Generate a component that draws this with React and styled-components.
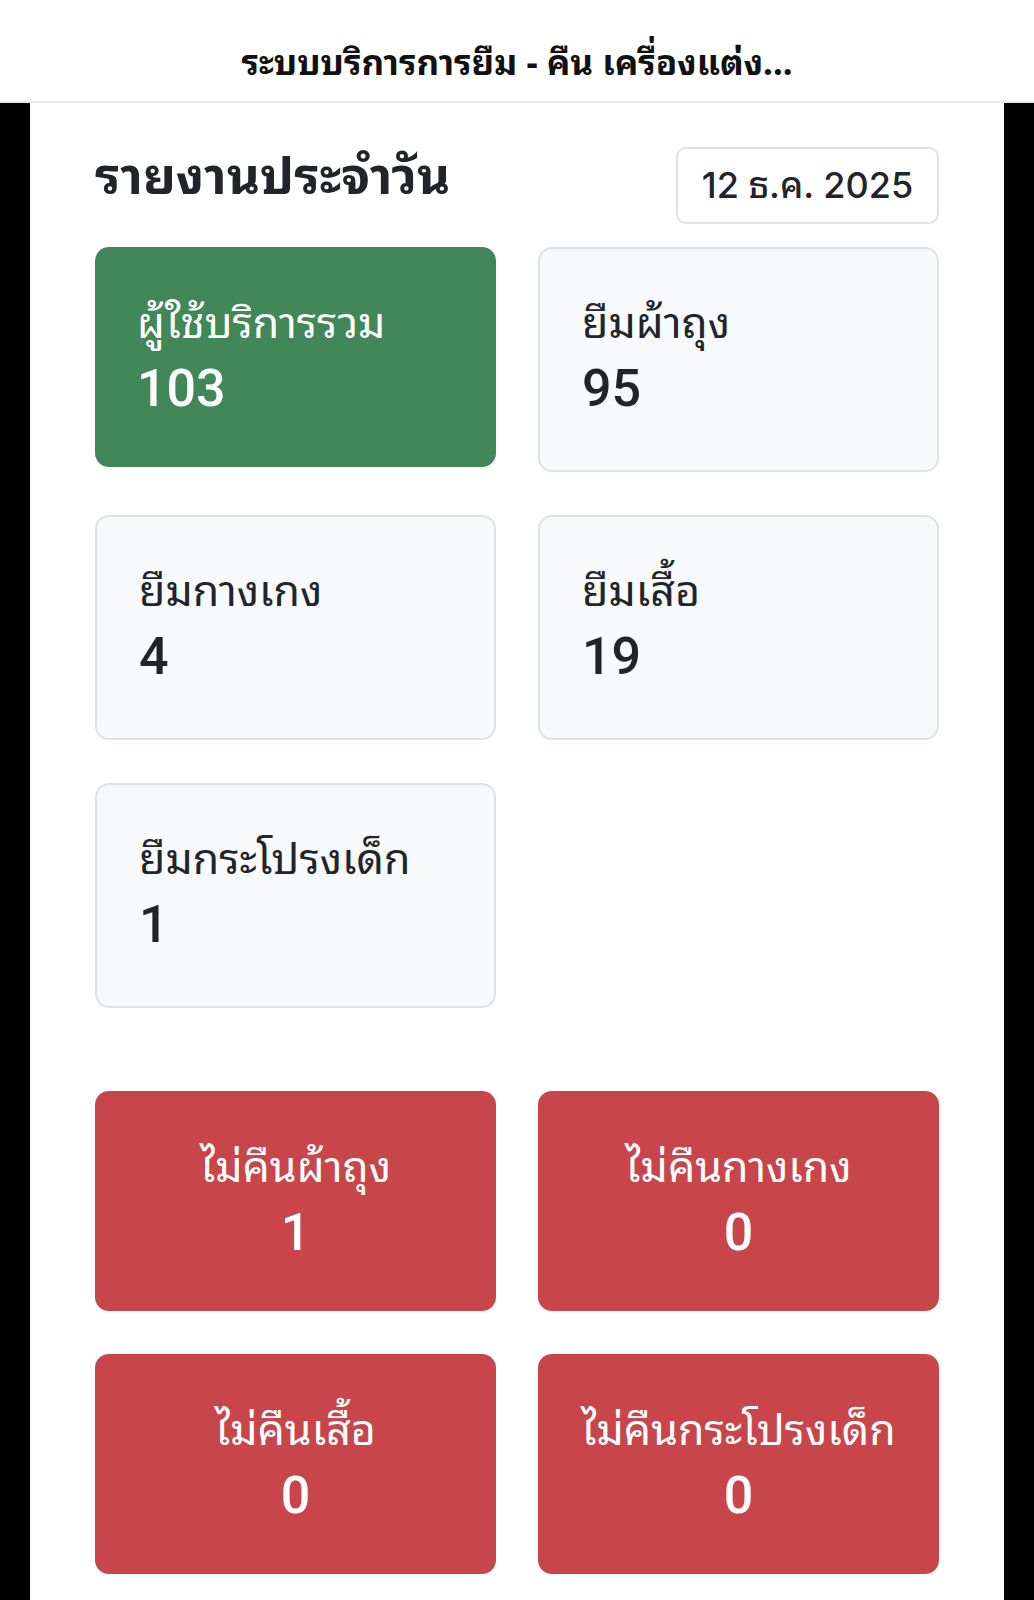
import React from 'react';
import styled, { createGlobalStyle } from 'styled-components';

const GlobalStyle = createGlobalStyle`
  html, body {
    margin: 0;
    padding: 0;
    background: #000;
  }
  body {
    font-family: "Noto Sans Thai Looped", "Noto Sans Thai", "Noto Sans", "Liberation Sans", sans-serif;
    color: #212529;
  }
`;

const TopBar = styled.header`
  box-sizing: border-box;
  height: 103px;
  padding-top: 16px;
  background: #fff;
  border-bottom: 2px solid #ebebeb;
  display: flex;
  align-items: center;
  justify-content: center;
  font-size: 35px;
  font-weight: 700;
  color: #111;
`;

const Page = styled.main`
  box-sizing: border-box;
  background: #fff;
  margin: 0 30px;
  padding: 44px 65px 20px;
  min-height: 1497px;
`;

const TitleRow = styled.div`
  display: flex;
  justify-content: space-between;
  align-items: flex-start;
  margin-bottom: 23px;
`;

const Title = styled.h1`
  margin: -6px 0 0;
  font-size: 51px;
  font-weight: 700;
  line-height: 1.2;
`;

const DateBox = styled.div`
  box-sizing: border-box;
  width: 263px;
  border: 2px solid #dee2e6;
  border-radius: 10px;
  padding: 14px 0;
  text-align: center;
  font-size: 36px;
  line-height: 45px;
  font-family: "Inter", "Noto Sans Thai Looped", "Noto Sans Thai", sans-serif;
  font-weight: 500;
  color: #212529;
`;

const Grid = styled.section`
  display: grid;
  grid-template-columns: 1fr 1fr;
  column-gap: 42px;
  row-gap: 43px;
  margin-bottom: ${p => p.$spaced ? '83px' : '0'};
`;

const tones = {
  green: { bg: '#428757', fg: '#fff' },
  light: { bg: '#f8f9fa', fg: '#212529' },
  red: { bg: '#c8454b', fg: '#fff' },
};

const Card = styled.div`
  box-sizing: border-box;
  height: ${p => p.$tone === 'light' ? '225px' : '220px'};
  background: ${p => tones[p.$tone].bg};
  color: ${p => tones[p.$tone].fg};
  border: ${p => p.$tone === 'light' ? '2px solid #dee2e6' : 'none'};
  border-radius: 14px;
  padding: ${p => p.$tone === 'light' ? '43px 42px' : '45px 42px'};
  text-align: ${p => p.$center ? 'center' : 'left'};
`;

const Label = styled.div`
  font-size: 43px;
  line-height: 54px;
`;

const Value = styled.div`
  margin-top: 8px;
  font-size: 52px;
  font-weight: 500;
  line-height: 70px;
  font-family: "Roboto", "Liberation Sans", sans-serif;
`;

const stats = [
  { label: 'ผู้ใช้บริการรวม', value: 103, tone: 'green' },
  { label: 'ยืมผ้าถุง', value: 95, tone: 'light' },
  { label: 'ยืมกางเกง', value: 4, tone: 'light' },
  { label: 'ยืมเสื้อ', value: 19, tone: 'light' },
  { label: 'ยืมกระโปรงเด็ก', value: 1, tone: 'light' },
];

const missing = [
  { label: 'ไม่คืนผ้าถุง', value: 1 },
  { label: 'ไม่คืนกางเกง', value: 0 },
  { label: 'ไม่คืนเสื้อ', value: 0 },
  { label: 'ไม่คืนกระโปรงเด็ก', value: 0 },
];

export default function App() {
  return (
    <>
      <GlobalStyle />
      <TopBar>ระบบบริการการยืม - คืน เครื่องแต่ง...</TopBar>
      <Page>
        <TitleRow>
          <Title>รายงานประจำวัน</Title>
          <DateBox>12 ธ.ค. 2025</DateBox>
        </TitleRow>
        <Grid $spaced>
          {stats.map(s => (
            <Card key={s.label} $tone={s.tone}>
              <Label>{s.label}</Label>
              <Value>{s.value}</Value>
            </Card>
          ))}
        </Grid>
        <Grid>
          {missing.map(s => (
            <Card key={s.label} $tone="red" $center>
              <Label>{s.label}</Label>
              <Value>{s.value}</Value>
            </Card>
          ))}
        </Grid>
      </Page>
    </>
  );
}
